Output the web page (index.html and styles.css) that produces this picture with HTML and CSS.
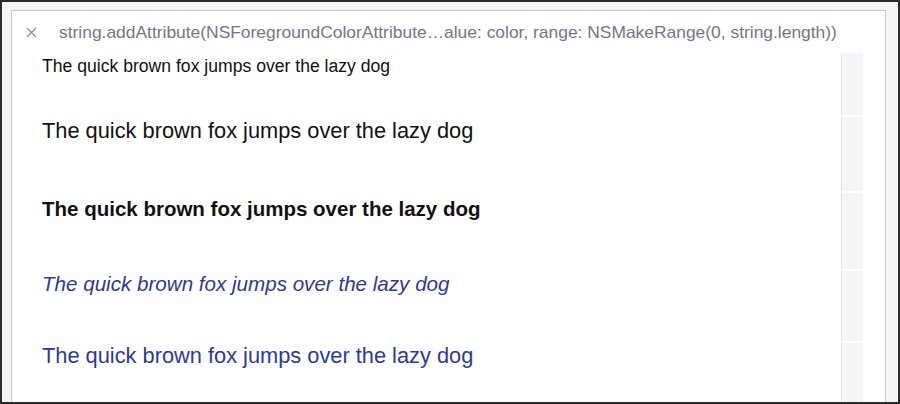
FILE: index.html
```html
<!DOCTYPE html>
<html>
<head>
<meta charset="utf-8">
<link rel="stylesheet" href="styles.css">
</head>
<body>
<div class="frame">
  <div class="panel">
    <div class="header">
      <svg class="close" width="11" height="11" viewBox="0 0 11 11"><path d="M1 1L10 10M10 1L1 10" stroke="#8c8c9a" stroke-width="1.2" fill="none"/></svg>
      <span class="code">string.addAttribute(NSForegroundColorAttribute…alue: color, range: NSMakeRange(0, string.length))</span>
    </div>
    <div class="rows">
      <div class="row r1"><div class="txt">The quick brown fox jumps over the lazy dog</div><div class="strip"></div></div>
      <div class="row r2"><div class="txt">The quick brown fox jumps over the lazy dog</div><div class="strip"></div></div>
      <div class="row r3"><div class="txt">The quick brown fox jumps over the lazy dog</div><div class="strip"></div></div>
      <div class="row r4"><div class="txt">The quick brown fox jumps over the lazy dog</div><div class="strip"></div></div>
      <div class="row r5"><div class="txt">The quick brown fox jumps over the lazy dog</div><div class="strip"></div></div>
    </div>
  </div>
</div>
</body>
</html>
```
FILE: styles.css
```css
html, body { margin: 0; padding: 0; }
body { font-family: "Liberation Sans", Arial, sans-serif; }
.frame {
  width: 900px; height: 404px; box-sizing: border-box;
  border: 2px solid #2a2a2a;
  background: #f4f4f4;
  padding: 8px 12px 0 9px;
  overflow: hidden;
  display: flex; flex-direction: column;
}
.panel {
  flex: 1;
  background: #fff;
  border: 1px solid #c6c6d8;
  border-bottom: none;
  display: flex; flex-direction: column;
}
.header {
  height: 42px;
  display: flex; align-items: center;
  padding-left: 14px;
}
.close { display: block; margin-right: 22px; margin-top: 0; }
.code {
  font-size: 17.42px; color: #767686; white-space: nowrap; margin-top: 0;
}
.rows { flex: 1; display: flex; flex-direction: column; }
.row { display: flex; }
.txt { flex: 1; padding-left: 30px; white-space: nowrap; line-height: 1; }
.strip {
  width: 21px; margin-right: 22px; margin-bottom: 2px;
  background: #f5f5f7;
  border-left: 1px solid #e2e2ea;
}
.r1 { height: 64px; }
.r1 .txt { font-size: 17.6px; color: #111; padding-top: 5px; }
.r2 { height: 76px; }
.r2 .txt { font-size: 21.8px; color: #111; padding-top: 3px; }
.r3 { height: 78px; }
.r3 .txt { font-size: 20.5px; font-weight: bold; color: #111; padding-top: 6px; }
.r4 { height: 72px; }
.r4 .txt { font-size: 20.6px; font-style: italic; color: #2d3a97; padding-top: 3px; }
.r5 { flex: 1; }
.r5 .txt { font-size: 21.8px; color: #2d3a97; padding-top: 2px; }
.r5 .strip { margin-bottom: 0; }
```
